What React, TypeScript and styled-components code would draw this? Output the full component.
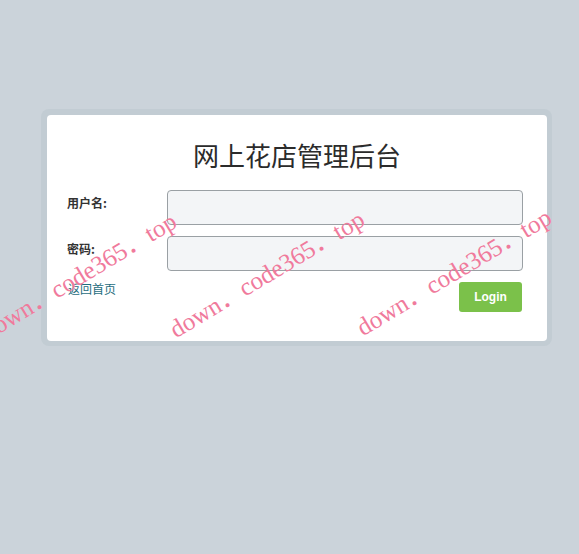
import styled, { createGlobalStyle } from 'styled-components';

const GlobalStyle = createGlobalStyle`
  html, body {
    margin: 0;
    padding: 0;
    background: #cbd3da;
    overflow: hidden;
  }
  * {
    box-sizing: border-box;
  }
`;

const Page = styled.div`
  position: relative;
  width: 579px;
  height: 554px;
  padding: 109px 0 0 41px;
  font-family: 'Liberation Sans', 'Noto Sans CJK SC', sans-serif;
  overflow: hidden;
`;

const CardFrame = styled.div`
  width: 511px;
  padding: 6px 5px 5px 6px;
  background: #c2ccd3;
  border-radius: 8px;
`;

const Card = styled.div`
  background: #ffffff;
  border-radius: 4px;
  padding: 22px 24px 29px 20px;
`;

const Title = styled.h1`
  margin: 0 0 17px;
  font-family: 'Noto Sans CJK SC', serif;
  font-size: 26px;
  line-height: 36px;
  font-weight: 400;
  color: #2b2b2b;
  text-align: center;
  padding-left: 4px;
`;

const Row = styled.div`
  display: flex;
  align-items: flex-start;
  margin-bottom: 11px;
`;

const Label = styled.label`
  width: 100px;
  flex-shrink: 0;
  padding-top: 3px;
  font-family: 'Noto Sans CJK SC', sans-serif;
  font-size: 12px;
  font-weight: 700;
  line-height: 20px;
  color: #333333;
`;

const Input = styled.input`
  flex: 1;
  height: 35px;
  border: 1px solid #9aa0a4;
  border-radius: 4px;
  background: #f3f5f7;
  outline: none;
  padding: 0 8px;
`;

const Actions = styled.div`
  display: flex;
  justify-content: space-between;
  align-items: flex-start;
`;

const BackLink = styled.a`
  font-family: 'Noto Sans CJK SC', sans-serif;
  font-size: 12px;
  line-height: 14px;
  color: #1f6d7e;
  text-decoration: none;
  margin-left: 1px;
`;

const LoginButton = styled.button`
  width: 63px;
  height: 30px;
  border: none;
  border-radius: 3px;
  background: #7bc14a;
  color: #ffffff;
  font-family: 'Liberation Sans', sans-serif;
  font-size: 12px;
  font-weight: 700;
  cursor: pointer;
  margin-right: 1px;
`;

const Watermark = styled.span<{ $x: number; $y: number }>`
  position: absolute;
  left: ${({ $x }) => $x}px;
  top: ${({ $y }) => $y - 25}px;
  font-family: 'Liberation Serif', 'Noto Sans CJK SC', serif;
  font-size: 25px;
  line-height: 25px;
  color: #f07a9c;
  white-space: nowrap;
  transform: rotate(-31deg);
  transform-origin: 0 100%;
  pointer-events: none;
`;

const marks = [
  { x: -10, y: 344 },
  { x: 178, y: 342 },
  { x: 365, y: 340 },
];

export default function App() {
  return (
    <Page>
      <GlobalStyle />
      <CardFrame>
        <Card>
          <Title>网上花店管理后台</Title>
          <Row>
            <Label>用户名:</Label>
            <Input type="text" />
          </Row>
          <Row>
            <Label>密码:</Label>
            <Input type="password" />
          </Row>
          <Actions>
            <BackLink href="#">返回首页</BackLink>
            <LoginButton>Login</LoginButton>
          </Actions>
        </Card>
      </CardFrame>
      {marks.map((m, i) => (
        <Watermark key={i} $x={m.x} $y={m.y}>
          down．code365．top
        </Watermark>
      ))}
    </Page>
  );
}
